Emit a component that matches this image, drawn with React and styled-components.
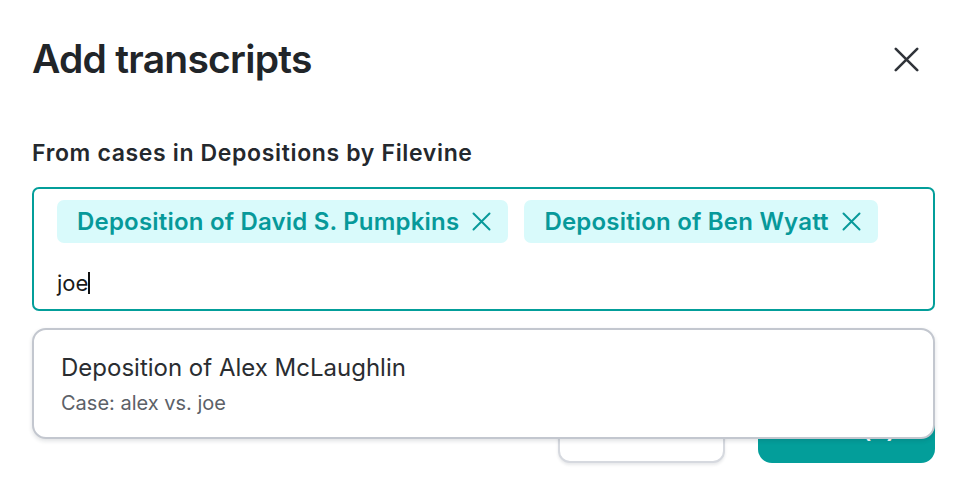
import React from 'react';
import styled, { createGlobalStyle } from 'styled-components';

const GlobalStyle = createGlobalStyle`
  * { box-sizing: border-box; }
  body {
    margin: 0;
    background: #ffffff;
    font-family: Inter, "Noto Sans", sans-serif;
    color: #212529;
  }
`;

const chips = ['Deposition of David S. Pumpkins', 'Deposition of Ben Wyatt'];

// plain X drawn edge to edge, inset by half the stroke so the caps stay inside
const CrossIcon = ({ size, stroke }) => {
  const a = stroke / 2 + 0.5;
  const b = size - a;
  return (
    <svg width={size} height={size} viewBox={`0 0 ${size} ${size}`} fill="none" stroke="currentColor" strokeWidth={stroke} strokeLinecap="round">
      <path d={`M${a} ${a} L${b} ${b} M${b} ${a} L${a} ${b}`} />
    </svg>
  );
};

const App = () => (
  <>
    <GlobalStyle />
    <Modal>
      <Header>
        <Title>Add transcripts</Title>
        <CloseButton aria-label="Close">
          <CrossIcon size={25} stroke={2.6} />
        </CloseButton>
      </Header>
      <Label>From cases in Depositions by Filevine</Label>
      <Field>
        <SearchBox>
          <ChipRow>
            {chips.map((c) => (
              <Chip key={c}>
                {c}
                <ChipRemove>
                  <CrossIcon size={19} stroke={2} />
                </ChipRemove>
              </Chip>
            ))}
          </ChipRow>
          <TypedText>
            joe
            <Caret />
          </TypedText>
        </SearchBox>
        <Dropdown>
          <Option>
            <OptionTitle>Deposition of Alex McLaughlin</OptionTitle>
            <OptionMeta>Case: alex vs. joe</OptionMeta>
          </Option>
        </Dropdown>
      </Field>
      <Footer>
        <SecondaryButton>Cancel</SecondaryButton>
        <PrimaryButton>Add (2)</PrimaryButton>
      </Footer>
    </Modal>
  </>
);

export default App;

const Modal = styled.div`
  width: 966px;
  height: 492px;
  padding: 35px 31px 0 32px;
  background: #ffffff;
  overflow: hidden;
`;

const Header = styled.div`
  display: flex;
  align-items: center;
  justify-content: space-between;
`;

const Title = styled.h1`
  margin: 0;
  font-size: 39px;
  line-height: 48px;
  font-weight: 600;
  letter-spacing: -0.75px;
  color: #212529;
`;

const CloseButton = styled.button`
  display: flex;
  align-items: center;
  justify-content: center;
  width: 40px;
  height: 40px;
  margin-right: 9px;
  padding: 0;
  border: none;
  background: none;
  color: #30343a;
`;

const Label = styled.div`
  margin-top: 56px;
  font-size: 23px;
  line-height: 28px;
  font-weight: 600;
  letter-spacing: 0.65px;
  color: #24282d;
`;

const Field = styled.div`
  position: relative;
  margin-top: 20px;
`;

const SearchBox = styled.div`
  display: flex;
  flex-direction: column;
  gap: 25px;
  height: 124px;
  padding: 11px 23px;
  border: 2px solid #039e9a;
  border-radius: 7px;
`;

const ChipRow = styled.div`
  display: flex;
  gap: 16px;
`;

const Chip = styled.span`
  display: inline-flex;
  align-items: center;
  gap: 13px;
  height: 43px;
  padding: 0 17px 0 20px;
  border-radius: 7px;
  background: #d9fafb;
  color: #07999a;
  font-size: 24px;
  font-weight: 600;
  letter-spacing: 0.2px;
`;

const ChipRemove = styled.span`
  display: flex;
  color: #07999a;
`;

const TypedText = styled.div`
  display: flex;
  align-items: center;
  height: 30px;
  font-size: 22px;
  color: #1a1a1a;
`;

const Caret = styled.span`
  display: inline-block;
  width: 2px;
  height: 22px;
  background: #111111;
`;

const Dropdown = styled.div`
  position: absolute;
  top: 141px;
  left: 0;
  right: 0;
  z-index: 2;
  height: 111px;
  background: #ffffff;
  border: 2px solid #c3c7cf;
  border-radius: 14px;
  box-shadow: 0 2px 4px rgba(30, 40, 60, 0.14);
`;

const Option = styled.div`
  display: flex;
  flex-direction: column;
  gap: 9px;
  padding: 23px 27px 22px;
`;

const OptionTitle = styled.div`
  font-size: 24px;
  line-height: 29px;
  color: #2a2d31;
`;

const OptionMeta = styled.div`
  font-size: 20px;
  line-height: 24px;
  color: #5c6168;
`;

const Footer = styled.div`
  display: flex;
  justify-content: flex-end;
  align-items: flex-end;
  gap: 33px;
  margin-top: 87px;
`;

const SecondaryButton = styled.button`
  width: 167px;
  height: 65px;
  border: 2px solid #d6d9df;
  border-radius: 12px;
  background: #ffffff;
  box-shadow: 0 2px 3px rgba(30, 40, 60, 0.1);
  font-family: Inter, sans-serif;
  font-size: 22px;
  font-weight: 600;
  color: #212529;
`;

const PrimaryButton = styled.button`
  width: 177px;
  height: 65px;
  padding: 0 0 0 12px;
  border: none;
  border-radius: 14px;
  background: #039e9a;
  font-family: Inter, sans-serif;
  font-size: 24px;
  font-weight: 600;
  color: #ffffff;
`;
